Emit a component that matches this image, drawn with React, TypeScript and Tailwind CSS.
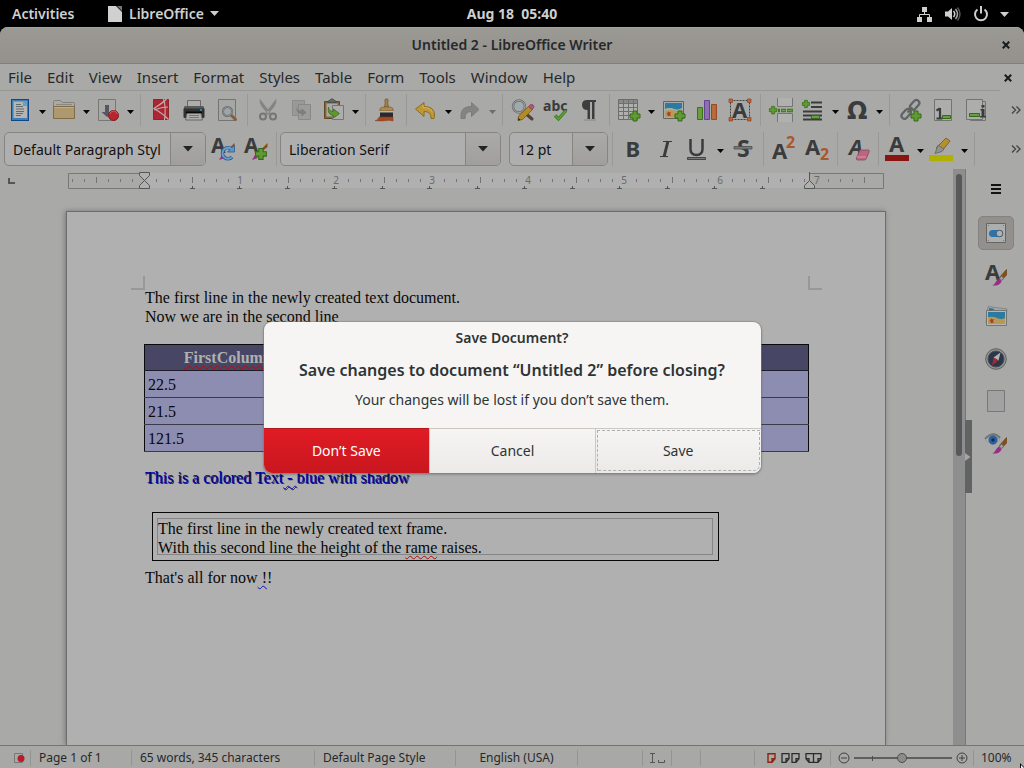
import React from "react";

type Kids = { children?: React.ReactNode };

function Ico({ children }: Kids) {
  return (
    <svg viewBox="0 0 24 24" className="h-6 w-6 shrink-0 overflow-visible" aria-hidden="true">
      {children}
    </svg>
  );
}

function Arrow({ dim }: { dim?: boolean }) {
  return (
    <svg viewBox="0 0 7 4" className="h-1 w-[7px]" aria-hidden="true">
      <path d="M0 0h7L3.500 4z" fill={dim ? "#6c6d6c" : "#050505"} />
    </svg>
  );
}

function Tool({ label, children, drop, dim }: Kids & { label: string; drop?: boolean; dim?: boolean }) {
  if (!drop) {
    return (
      <button aria-label={label} className="flex w-[33px] shrink-0 items-center justify-center">
        {children}
      </button>
    );
  }
  return (
    <div className="flex shrink-0">
      <button aria-label={label} className="flex w-8 items-center justify-center">
        {children}
      </button>
      <button aria-label={label + " options"} className="flex w-3 items-center justify-center pt-1">
        <Arrow dim={dim} />
      </button>
    </div>
  );
}

function Sep() {
  return (
    <div className="flex w-2 shrink-0 justify-center">
      <div className="my-[3px] w-px bg-[#9a9997]" />
    </div>
  );
}

const Plus = ({ x, y, s = 1 }: { x: number; y: number; s?: number }) => (
  <path
    transform={`translate(${x} ${y}) scale(${s})`}
    d="M3.500.5h4v3h3v4h-3v3h-4v-3h-3v-4h3z"
    fill="#5f9b34"
    stroke="#356b14"
  />
);

function Brush() {
  return (
    <g>
      <path d="M22.500 6.500V12l-4.500 5-2.500-2.500z" fill="#8a4d12" stroke="#5d3510" strokeWidth=".6" />
      <path d="M17.500 13l2.500 2.300-2.500 2.400-2.400-2.300z" fill="#9b9ea0" stroke="#55585a" strokeWidth=".6" />
      <path d="M15 15.500l2.600 2.400c-1 3.500-4 5-9.600 4.600 3.500-.8 4-5.600 7-7z" fill="#972f86" />
    </g>
  );
}

function Letter({
  ch,
  x,
  y,
  size,
  italic,
  fill = "#3a3b3c",
  family = "'Noto Sans', sans-serif",
}: {
  ch: string;
  x: number;
  y: number;
  size: number;
  italic?: boolean;
  fill?: string;
  family?: string;
}) {
  return (
    <text x={x} y={y} fontSize={size} fontWeight="700" fontStyle={italic ? "italic" : "normal"} fontFamily={family} fill={fill}>
      {ch}
    </text>
  );
}

function Combo({ label, value, className }: { label: string; value: string; className: string }) {
  return (
    <div className={"flex h-[34px] shrink-0 overflow-hidden rounded-[5px] border border-[#868380] bg-[#afafaf] " + className}>
      <input aria-label={label} defaultValue={value} className="w-full min-w-0 flex-1 bg-transparent pl-2 text-[14px] text-[#111] outline-none" />
      <button aria-label={label + " list"} className="flex w-[35px] shrink-0 items-center justify-center border-l border-[#868380] bg-linear-to-b from-[#aaaaa8] to-[#a19f9d]">
        <svg viewBox="0 0 10 6" className="h-[6px] w-[10px]" aria-hidden="true">
          <path d="M0 0h10L5 5.500z" fill="#202426" />
        </svg>
      </button>
    </div>
  );
}

function StandardToolbar() {
  return (
    <div className="flex h-[38px] shrink-0 overflow-hidden pl-1">
      <Tool label="New" drop>
        <Ico>
          <rect x="3.500" y="1.500" width="17" height="21" fill="#3d7fb5" stroke="#0d478a" />
          <path d="M5 3h14v17H5z" fill="#639cc5" />
          <path d="M6 4h9l4 4v12H6z" fill="#b5b6b4" />
          <path d="M15 4v4h4z" fill="#7c96a8" />
          <path d="M8 6.500h5M8 8.500h7M8 11h8M8 13.500h8M8 15.500h7M8 17.500h5" stroke="#606b72" />
        </Ico>
      </Tool>
      <Tool label="Open" drop>
        <Ico>
          <path d="M1.500 20.500v-17q0-1 1-1h6l2 2h11q1 0 1 1v15z" fill="#aaa9a5" stroke="#828079" />
          <path d="M4 6.500h16" stroke="#888" />
          <path d="M1.500 8.500h21v12h-21z" fill="#ad986f" stroke="#806b42" />
          <path d="M2.500 9.500h19" stroke="#c0ae8b" />
        </Ico>
      </Tool>
      <Tool label="Save" drop>
        <Ico>
          <path d="M2.500 1.500h17v21h-17z" fill="#a8a8a6" stroke="#777775" />
          <path d="M9 7h4v7h3.500L11 19l-5.500-5H9z" fill="#565860" />
          <circle cx="17.500" cy="17.500" r="5" fill="#b62530" stroke="#8b151d" />
          <path d="M13.500 16q1.500-3 4-3t4 3" stroke="#d0616b" fill="none" />
        </Ico>
      </Tool>
      <Sep />
      <Tool label="Export as PDF">
        <Ico>
          <path d="M4.500 1.500h15v20h-15z" fill="#ac2530" stroke="#89272c" />
          <path d="M17.500 1c-2.500 3-6.500 5.500-12.500 9.500 5 3 10 6 14.500 11M14.500 1c2 6 2 14 1 21M5 12c5-2 10-3 14-3" fill="none" stroke="#c4a8a8" strokeWidth="1.200" />
        </Ico>
      </Tool>
      <Tool label="Print">
        <Ico>
          <path d="M5.500 2.500h13v7h-13z" fill="#adadab" stroke="#696967" />
          <path d="M3 8h18l1.500 3v8q0 1-1 1h-19q-1 0-1-1v-8z" fill="#303231" />
          <path d="M3 8h18l1 2.500H2z" fill="#595b5a" />
          <path d="M4 14.500h16" stroke="#090909" strokeWidth="2" />
          <path d="M5 15.500h14l1.500 6.500h-17z" fill="#adadab" stroke="#686866" />
          <path d="M7 17.500h10M7 19.500h10" stroke="#797977" />
          <path d="M18 11h2v2h-2z" fill="#2789b1" />
        </Ico>
      </Tool>
      <Tool label="Print preview">
        <Ico>
          <path d="M3.500 1.500h17v21h-17z" fill="#a6a6a4" stroke="#747472" />
          <path d="M17 18l3.500 3.500" stroke="#805f42" strokeWidth="3" strokeLinecap="round" />
          <circle cx="12.500" cy="13.500" r="4.500" fill="#9ea4a7" stroke="#626466" strokeWidth="2" />
          <circle cx="12.500" cy="13.500" r="4.500" fill="none" stroke="#a4a6a7" strokeWidth=".7" />
        </Ico>
      </Tool>
      <Sep />
      <Tool label="Cut">
        <Ico>
          <path d="M4 1.500q-.5 4 2 7l6.500 8 1.500-2zM20 1.500q.5 4-2 7l-6.500 8-1.500-2z" fill="#858584" stroke="#787877" strokeWidth=".5" />
          <circle cx="7" cy="18.500" r="3" fill="none" stroke="#757574" strokeWidth="2" />
          <circle cx="17" cy="18.500" r="3" fill="none" stroke="#757574" strokeWidth="2" />
        </Ico>
      </Tool>
      <Tool label="Copy">
        <Ico>
          <path d="M3.500 2.500h12v15h-12z" fill="#999998" stroke="#8c8c8b" />
          <path d="M9.500 6.500h12v15h-12z" fill="#9c9c9b" stroke="#888887" />
          <path d="M7.500 8q0 4.500 5 4.500V10l5 4.500-5 4v-2.500q-6-.5-5-8z" fill="#7d7e7f" />
        </Ico>
      </Tool>
      <Tool label="Paste" drop>
        <Ico>
          <path d="M3.500 3.500h15v17h-15z" fill="#836743" stroke="#604721" />
          <path d="M5.500 5.500h11v13h-11z" fill="#a9a9a7" />
          <path d="M6.500 4.500q0-2 2.500-2 0-1.500 2-1.500t2 1.500q2.500 0 2.500 2z" fill="#676967" stroke="#4a4c4a" />
          <path d="M11.500 7.500h11v14h-11z" fill="#adadab" stroke="#757573" />
          <path d="M7.500 9q0 4.500 5 4.500V11l6 4.500-6 4.500v-2.500q-6.500-.5-5-8.500z" fill="#5e982c" stroke="#3d701c" strokeWidth=".8" />
        </Ico>
      </Tool>
      <Sep />
      <Tool label="Clone formatting">
        <Ico>
          <path d="M10.500 9l.8-4q-1-3 .2-4h2q1.200 1 .2 4l.8 4z" fill="#a7834d" stroke="#70552c" strokeWidth=".8" />
          <path d="M6 10.500q1-1.500 4-1.500h5q3 0 4 1.500V13H6z" fill="#ac8a52" stroke="#6f552f" strokeWidth=".6" />
          <path d="M6 13h13v1.500H6z" fill="#b4b6b4" />
          <path d="M6 14.500h13V19H6z" fill="#292b2a" />
          <path d="M5 19h14v4q-4-1-6-.5-3 .8-12 .2 3-.2 4-3.700z" fill="#a94922" stroke="#823b21" strokeWidth=".5" />
        </Ico>
      </Tool>
      <Sep />
      <Tool label="Undo" drop>
        <Ico>
          <path d="M10 4.500v4q10.500 0 10.500 8.500 0 2-.5 3.500h-3q.5-7-7-7v5L1.500 11z" fill="#bd9834" stroke="#8c6b1e" />
          <path d="M9 7v2.500q8 0 9.500 5" fill="none" stroke="#d1b667" />
        </Ico>
      </Tool>
      <Tool label="Redo" drop dim>
        <Ico>
          <path d="M13.500 4.500v4Q3 8.500 3 17v3.500h4q-.5-7 6.500-7v5l7.500-7z" fill="#848484" stroke="#7b7b7b" />
        </Ico>
      </Tool>
      <Sep />
      <Tool label="Find and replace">
        <Ico>
          <path d="M14 15l7 6" stroke="#554034" strokeWidth="3" strokeLinecap="round" />
          <circle cx="8" cy="8.500" r="6" fill="#a1a9ab" stroke="#656768" strokeWidth="2.400" />
          <circle cx="8" cy="8.500" r="6" fill="none" stroke="#a6a8a8" />
          <path d="M17.500 8.500l4 3-10 10-4.500 1 .5-4.500z" fill="#b58b26" stroke="#71551c" strokeWidth=".8" />
          <path d="M17.500 8.500l2-2q1-.5 2.500.5 1.500 1.300.7 2.500l-1.700 2z" fill="#b0557c" stroke="#863d59" strokeWidth=".8" />
          <path d="M7.500 20l-.5 2.500 2.500-.5z" fill="#222" />
        </Ico>
      </Tool>
      <Tool label="Spelling">
        <Ico>
          <Letter ch="abc" x={-1} y={13} size={14} />
          <path d="M11 17.500l3.500 3.500 7.500-8.500" fill="none" stroke="#397b24" strokeWidth="3.200" />
          <path d="M11 17.500l3.500 3.500 7.500-8.500" fill="none" stroke="#5d9f36" strokeWidth="1.600" />
        </Ico>
      </Tool>
      <Tool label="Formatting marks">
        <Ico>
          <path d="M10 2h9v2h-1.500v17H15V4h-2v17h-2.500v-9Q5 12 5 7t5-5z" fill="#3c3d3e" />
          <path d="M7 22h12" stroke="#888" />
        </Ico>
      </Tool>
      <Sep />
      <Tool label="Table" drop>
        <Ico>
          <path d="M1.500 1.500h19v20h-19z" fill="#afafad" stroke="#6b6d6b" />
          <path d="M2 2h18v3.500H2z" fill="#898b89" />
          <path d="M1.500 5.500h19M1.500 9.500h19M1.500 13.500h19M1.500 17.500h19M6.500 1.500v20M11.500 1.500v20M16.500 1.500v20" stroke="#6e706e" fill="none" />
          <Plus x={12.500} y={12.500} />
        </Ico>
      </Tool>
      <Tool label="Image">
        <Ico>
          <path d="M1.500 3.500h20v17h-20z" fill="#aaa" stroke="#626462" />
          <path d="M3 5h17v9H3z" fill="#297ba2" />
          <path d="M3 11q5-2 9 0t8-1v9H3z" fill="#b89a58" />
          <path d="M3 11q5-2 9 0t8-1v1.500q-4 2-8 1t-9 .5z" fill="#9ab0b4" />
          <path d="M6 13l1 1.500 2-.5-1 2 1 2-2-.5-1 1-.5-2-1.500-1h1.500z" fill="#a83c1d" />
          <Plus x={12.500} y={12.500} />
        </Ico>
      </Tool>
      <Tool label="Chart">
        <Ico>
          <path d="M2.500 9.500h5v12h-5z" fill="#679f3f" stroke="#3d7218" />
          <path d="M9.500 2.500h5v19h-5z" fill="#8c70ad" stroke="#634393" />
          <path d="M16.500 6.500h5v15h-5z" fill="#b76a3f" stroke="#964820" />
        </Ico>
      </Tool>
      <Tool label="Text box">
        <Ico>
          <path d="M2.500 2.500h19v19h-19z" fill="none" stroke="#414243" strokeDasharray="2 1" />
          <Letter ch="A" x={4} y={20} size={22} />
          <path d="M1 1h3.500v3.500H1zM19.500 1H23v3.500h-3.500zM1 19.500h3.500V23H1zM19.500 19.500H23V23h-3.500z" fill="#b3693f" stroke="#9c4720" strokeWidth=".8" />
        </Ico>
      </Tool>
      <Sep />
      <Tool label="Page break">
        <Ico>
          <path d="M8.500 0v8.500h15V0M8.500 24v-8.500h15V24" fill="#b0b0ae" stroke="#747674" />
          <Plus x={0} y={8} s={0.75} />
          <path d="M9 12.500h2M12 12.500h5M18 12.500h6" stroke="#3c731d" strokeWidth="3.500" />
          <path d="M12.500 12.500h4M18.500 12.500h5" stroke="#69a343" strokeWidth="1.500" />
        </Ico>
      </Tool>
      <Tool label="Field" drop>
        <Ico>
          <path d="M10 4.500h11M10 9h11M2 13.500h19M2 17.500h19M2 21.500h19" stroke="#3b3c3d" strokeWidth="2.200" />
          <Plus x={1} y={2} s={0.72} />
          <path d="M10.500 17.500h8v3h-8z" fill="#68a145" stroke="#346c19" />
        </Ico>
      </Tool>
      <Tool label="Symbol" drop>
        <Ico>
          <Letter ch="Ω" x={2} y={21} size={24} family="'DejaVu Sans', sans-serif" />
        </Ico>
      </Tool>
      <Sep />
      <Tool label="Hyperlink">
        <Ico>
          <g fill="none" stroke="#606264" strokeWidth="2.200">
            <rect x="0" y="-3" width="11" height="6" rx="3" transform="translate(4.500 20) rotate(-48)" />
            <rect x="0" y="-3" width="11" height="6" rx="3" transform="translate(13 11) rotate(-48)" />
            <path d="M9.500 14.500l5-5" />
          </g>
          <Plus x={12.500} y={12.500} />
        </Ico>
      </Tool>
      <Tool label="Footnote">
        <Ico>
          <path d="M3.500 1.500h17v21h-17z" fill="#adadab" stroke="#727472" />
          <path d="M9 10v11M5.500 20.500h6M9 10.500l-3.500 2" stroke="#3a3b3c" strokeWidth="2.200" fill="none" />
          <path d="M11.500 17.500h8v3h-8z" fill="#679e43" stroke="#346b18" />
        </Ico>
      </Tool>
      <Tool label="Endnote">
        <Ico>
          <path d="M6.500 3.500h15v19h-15z" fill="#a9a9a7" stroke="#727472" />
          <path d="M2.500 1.500h16v20h-16z" fill="#adadab" stroke="#727472" />
          <path d="M5.500 15.500h10v3h-10z" fill="#679e43" stroke="#346b18" />
          <path d="M17.500 7h3v2.500h-3zM16.500 11h4v7h1.500v1.500h-6V18h1.500v-5.500h-1z" fill="#3a3b3c" />
        </Ico>
      </Tool>
      <button aria-label="More standard tools" className="ml-auto flex w-[16px] items-center justify-center">
        <More />
      </button>
    </div>
  );
}

function More() {
  return (
    <svg viewBox="0 0 10 8" className="h-2 w-[10px]" aria-hidden="true">
      <path d="M1 .5L4.500 4 1 7.500M5.500.5L9 4 5.500 7.500" fill="none" stroke="#444647" strokeWidth="1.400" />
    </svg>
  );
}

function FormattingToolbar() {
  return (
    <div className="flex h-10 shrink-0 items-stretch overflow-hidden pl-1">
      <div className="flex items-center">
        <Combo label="Paragraph style" value="Default Paragraph Styl" className="w-[202px]" />
      </div>
      <div className="flex">
        <Tool label="Update style">
          <Ico>
            <Letter ch="A" x={0} y={16} size={21} />
            <path d="M8 23l3-5 3 3z" fill="#972f86" />
            <path d="M23.500 6v4l-5 4-1-2z" fill="#8a4d12" />
            <path d="M20.500 12A5.500 5.500 0 1 0 21 20" fill="none" stroke="#2c5d93" strokeWidth="3.600" />
            <path d="M23.500 8v7h-7z" fill="#5d94c7" stroke="#2c5d93" strokeWidth=".8" />
            <path d="M20.500 12A5.500 5.500 0 1 0 21 20" fill="none" stroke="#6b9fd0" strokeWidth="1.800" />
          </Ico>
        </Tool>
        <Tool label="New style">
          <Ico>
            <Letter ch="A" x={0} y={16} size={21} />
            <path d="M8 23l3-5 3 3z" fill="#972f86" />
            <path d="M23.500 6v4l-5 4-1-2z" fill="#8a4d12" />
            <Plus x={11} y={11} s={1.08} />
          </Ico>
        </Tool>
        <Sep />
      </div>
      <div className="flex items-center gap-2">
        <Combo label="Font name" value="Liberation Serif" className="w-[221px]" />
        <Combo label="Font size" value="12 pt" className="w-[99px]" />
      </div>
      <Sep />
      <Tool label="Bold">
        <Ico>
          <Letter ch="B" x={4.500} y={20} size={22} />
        </Ico>
      </Tool>
      <Tool label="Italic">
        <Ico>
          <path d="M9 4.500h9M6 19.500h8" stroke="#3a3b3c" />
          <path d="M10 20L14 4" stroke="#3a3b3c" strokeWidth="3" />
        </Ico>
      </Tool>
      <Tool label="Underline" drop>
        <Ico>
          <path d="M4.500 2v10q0 6 6 6t6-6V2" fill="none" stroke="#3a3b3c" strokeWidth="2.500" />
          <path d="M1.500 20.500h18v2h-18z" fill="#777877" stroke="#303132" strokeWidth=".8" />
        </Ico>
      </Tool>
      <Tool label="Strikethrough">
        <Ico>
          <Letter ch="S" x={6} y={20} size={23} />
          <path d="M3 9.500h18v2.500H3z" fill="#777977" stroke="#4d4f4f" strokeWidth=".8" />
        </Ico>
      </Tool>
      <Sep />
      <Tool label="Superscript">
        <Ico>
          <Letter ch="A" x={0} y={22} size={22} />
          <Letter ch="2" x={14} y={11} size={16} fill="#a9582c" />
        </Ico>
      </Tool>
      <Tool label="Subscript">
        <Ico>
          <Letter ch="A" x={0} y={18} size={22} />
          <Letter ch="2" x={15} y={23} size={16} fill="#a9582c" />
        </Ico>
      </Tool>
      <Sep />
      <Tool label="Clear formatting">
        <Ico>
          <Letter ch="A" x={3} y={18} size={22} italic />
          <path d="M14 13h8.500q1 0 .8 1.500L20.500 21q-.5 2-2 2h-7q-1.500 0-1-2z" fill="#bb6680" stroke="#8a4660" strokeWidth=".8" />
          <path d="M11 20h9" stroke="#d39aae" />
        </Ico>
      </Tool>
      <Sep />
      <Tool label="Font color" drop>
        <Ico>
          <Letter ch="A" x={3} y={15} size={22} />
          <path d="M-1 18h24v6H-1z" fill="#881511" />
        </Ico>
      </Tool>
      <Tool label="Highlighting" drop>
        <Ico>
          <path d="M16 1l4 3-8 10-6-3z" fill="#b7902e" stroke="#725819" strokeWidth=".8" />
          <path d="M8 8l6 4-2 2.500-7 2z" fill="#8f9290" stroke="#606361" strokeWidth=".8" />
          <path d="M-1 18h24v6H-1z" fill="#b1b000" />
        </Ico>
      </Tool>
      <Sep />
      <button aria-label="More formatting tools" className="ml-auto flex w-[16px] items-center justify-center">
        <More />
      </button>
    </div>
  );
}

const quarterTicks = Array.from({ length: 67 }, (_, i) => i);

function Ruler() {
  const origin = 76;
  const step = 12;
  return (
    <svg viewBox="0 0 816 20" className="mx-auto h-5 w-[816px] shrink-0" aria-hidden="true">
      <path d="M76 3h666v15H76z" fill="#b0b0b0" />
      <path d="M76 3.500H.5v15H76M741 3.500h74.500v15H741" fill="none" stroke="#777876" />
      {quarterTicks.map((i) => {
        const n = i - 6;
        const x = origin + n * step + 0.5;
        if (n === 0 || (n > 0 && n % 8 === 0)) return null;
        return <path key={i} d={n % 4 === 0 ? `M${x} 7v6` : `M${x} 9v3`} stroke="#737473" />;
      })}
      {[1, 2, 3, 4, 5, 6, 7].map((n) => (
        <text key={n} x={origin + n * 96 - (n === 7 ? 2 : 0)} y="14" fontSize="10" textAnchor={n === 7 ? "start" : "middle"} fontFamily="'Noto Sans', sans-serif" fill="#6a6b6a">
          {n}
        </text>
      ))}
      {Array.from({ length: 13 }, (_, i) => (
        <path key={i} d={`M${Math.round(origin + (i + 1) * 47.5) - 2} 18.500h5M${Math.round(origin + (i + 1) * 47.5)}.5 16v2`} stroke="#555" />
      ))}
      <path d="M71.500 2.500h10v3l-5 5 5 5v3h-10v-3l5-5-5-5z" fill="#b0b0b0" stroke="#555756" />
      <path d="M741.500 2v8.500l5 5v3h-10v-3l5-5" fill="#b0b0b0" stroke="#555756" />
    </svg>
  );
}

function Document() {
  return (
    <section className="relative mx-auto mt-[21px] flex w-[820px] flex-1 flex-col border border-b-0 border-[#6b6c6c] bg-[#b0b0b0] pt-[76px] pr-[76px] pl-[77px] font-['Liberation_Serif','Times_New_Roman',serif] text-[16px] leading-[19px] text-[#080808] shadow-[-1px_0_5px_#777]">
      <div className="absolute top-[64px] left-[64px] h-[14px] w-[14px] border-r-2 border-b-2 border-[#989898]" />
      <div className="absolute top-[64px] right-[63px] h-[14px] w-[14px] border-b-2 border-l-2 border-[#989898]" />
      <p className="pl-px">The first line in the newly created text document.</p>
      <p className="pl-px">Now we are in the second line</p>
      <table className="mt-[18px] w-full table-fixed border-collapse border border-[#0a0a0a] text-left">
        <thead>
          <tr className="h-[26px] border-b border-[#1c1c28] bg-[#474765]">
            <th className="text-center font-bold text-[#b0b0b0]">
              <span className="underline decoration-[#b00d0d] decoration-wavy decoration-1 underline-offset-2">FirstColumn</span>
            </th>
            <th />
            <th />
            <th />
          </tr>
        </thead>
        <tbody>
          {["22.5", "21.5", "121.5"].map((v) => (
            <tr key={v} className="h-[27px] border-b border-[#3a3a48] bg-[#8d8db1]">
              <td className="px-[3px] py-[3px]">{v}</td>
              <td />
              <td />
              <td />
            </tr>
          ))}
        </tbody>
      </table>
      <p className="mt-4 pl-px text-[#0000a8] [text-shadow:1px_1px_0_#222]">
        This is a colored Text
        <span className="underline decoration-[#1515b0] decoration-wavy decoration-1 underline-offset-2"> - </span>
        blue with shadow
      </p>
      <div className="mt-[25px] ml-2 w-[567px] border border-[#080808] py-[5px] pr-[5px] pl-1">
        <div className="border border-[#858585]">
          <p>The first line in the newly created text frame.</p>
          <p className="-mb-[3px]">
            With this second line the height of the{" "}
            <span className="underline decoration-[#b00d0d] decoration-wavy decoration-1 underline-offset-2">rame</span> raises.
          </p>
        </div>
      </div>
      <p className="mt-[7px] pl-px">
        That's all for now<span className="underline decoration-[#1515b0] decoration-wavy decoration-1 underline-offset-2"> !</span>!
      </p>
    </section>
  );
}

function SideButton({ label, active, children }: Kids & { label: string; active?: boolean }) {
  return (
    <button
      aria-label={label}
      className={"flex h-[34px] w-9 items-center justify-center rounded-[5px] " + (active ? "border border-[#85817e] bg-[#938f8c]" : "")}
    >
      {children}
    </button>
  );
}

function Sidebar() {
  return (
    <aside className="relative flex w-[59px] shrink-0 flex-col items-center gap-2 border-l border-[#777776] pt-[3px] pl-[2px]">
      <button aria-label="Collapse sidebar" className="absolute top-[251px] -left-px flex h-[73px] w-[7px] items-center bg-[#616362]">
        <svg viewBox="0 0 6 8" className="h-2 w-[6px]" aria-hidden="true">
          <path d="M0 0l5.500 4L0 8z" fill="#a5a5a4" />
        </svg>
      </button>
      <SideButton label="Sidebar settings">
        <svg viewBox="0 0 10 10" className="h-[10px] w-[10px]" aria-hidden="true">
          <path d="M0 1h10M0 5h10M0 9h10" stroke="#111314" strokeWidth="2" />
        </svg>
      </SideButton>
      <div className="mt-[2px] flex flex-col gap-2">
        <SideButton label="Properties" active>
          <Ico>
            <path d="M2.500 2.500h19v19h-19z" fill="#adafae" stroke="#656766" />
            <rect x="5" y="9" width="14" height="7" rx="3.500" fill="#2e72ac" />
            <circle cx="15.500" cy="12.500" r="3.300" fill="#afb2b4" stroke="#4a5d70" />
            <path d="M4 4h1v1H4zM19 4h1v1h-1zM4 19h1v1H4zM19 19h1v1h-1z" fill="#777" />
          </Ico>
        </SideButton>
        <SideButton label="Styles">
          <Ico>
            <Letter ch="A" x={1} y={17} size={22} />
            <Brush />
          </Ico>
        </SideButton>
        <SideButton label="Gallery">
          <Ico>
            <path d="M4 1.500l19 2.500-2 15-19-1z" fill="#a3a6a6" stroke="#777" strokeWidth=".7" />
            <path d="M5 3l6 1-6 3z" fill="#2b7294" />
            <path d="M2.500 5.500h20v15h-20z" fill="#b4b5b4" stroke="#666" strokeWidth=".8" />
            <path d="M4 7h17v7H4z" fill="#297ba2" />
            <path d="M4 12q5-1 9 1t8 0v6H4z" fill="#b79856" />
            <path d="M7 13l1 1.500 2-.5-1 2 1 2-2-.5-1 1-.5-2-1.500-1h1.500z" fill="#a83c1d" />
          </Ico>
        </SideButton>
        <SideButton label="Navigator">
          <Ico>
            <circle cx="12" cy="12" r="10.300" fill="#929493" stroke="#5f6261" />
            <circle cx="12" cy="12" r="8" fill="#2b3748" stroke="#494f57" />
            <path d="M16.500 5.500l-2 8-5-3z" fill="#b1b3b3" />
            <path d="M9.500 10.500l5 3-6.500 5z" fill="#a52a30" />
          </Ico>
        </SideButton>
        <SideButton label="Page">
          <Ico>
            <path d="M3.500 1.500h17v21h-17z" fill="#a1a2a1" stroke="#777877" />
          </Ico>
        </SideButton>
        <SideButton label="Style inspector">
          <Ico>
            <path d="M1 8q8-9 15-1" fill="none" stroke="#717474" strokeWidth="2" />
            <path d="M1 9q7-6 15 0-7 6-15 0z" fill="#b2b4b3" stroke="#8b8e8d" strokeWidth=".6" />
            <circle cx="9" cy="9" r="4.200" fill="#2c62a8" stroke="#244a79" strokeWidth=".6" />
            <circle cx="9" cy="9" r="1.700" fill="#102e57" />
            <Brush />
          </Ico>
        </SideButton>
      </div>
    </aside>
  );
}

function StatusBar() {
  const cell = "flex items-center border-l border-[#949493]";
  return (
    <footer className="flex h-[23px] shrink-0 border-t border-[#747473] bg-[#a8a8a6] text-[12px] text-[#26292a]">
      <div className="flex w-full pt-1 pb-[2px]">
        <div className="flex w-[30px] items-center justify-center pl-2">
          <svg viewBox="0 0 12 12" className="h-3 w-3" aria-hidden="true">
            <path d="M1.500 1.500h8v9h-8z" fill="none" stroke="#777" />
            <circle cx="8" cy="6.500" r="3.500" fill="#b51d2a" />
          </svg>
        </div>
        <div className={cell + " w-[101px] pl-2"}>Page 1 of 1</div>
        <div className={cell + " w-[183px] pl-2"}>65 words, 345 characters</div>
        <div className={cell + " w-[141px] pl-2"}>Default Page Style</div>
        <div className={cell + " w-[122px] justify-center"}>English (USA)</div>
        <div className={cell + " min-w-0 flex-1"} />
        <div className={cell + " w-[29px] justify-center"}>
          <svg viewBox="0 0 17 12" className="h-3 w-[17px]" aria-hidden="true">
            <path d="M1 1.500h5M3.500 1.500v9M1 10.500h5M9.500 8v2.500h6V8" fill="none" stroke="#555756" />
          </svg>
        </div>
        <div className={cell + " w-[29px]"} />
        <div className={cell + " w-[54px]"} />
        <div className={cell + " w-[76px] justify-center gap-[5px] pl-1"}>
          <button aria-label="Single-page view">
            <svg viewBox="0 0 9 10" className="h-[10px] w-[9px]" aria-hidden="true">
              <path d="M1 .7h7v5L5 9.300H1zM8 5.700H5v3.600" fill="none" stroke="#8c2410" strokeWidth="1.400" />
            </svg>
          </button>
          <button aria-label="Multiple-page view">
            <svg viewBox="0 0 19 10" className="h-[10px] w-[19px]" aria-hidden="true">
              <path d="M1 .7h7v5L5 9.300H1zM8 5.700H5v3.600M11 .7h7v5l-3 3.600h-4zM18 5.700h-3v3.600" fill="none" stroke="#2a2c2d" strokeWidth="1.300" />
            </svg>
          </button>
          <button aria-label="Book view">
            <svg viewBox="0 0 17 10" className="h-[10px] w-[17px]" aria-hidden="true">
              <path d="M1 .7h7.500v8.600H4L1 5.700zM1 5.700h3v3.600M8.500.7H16v5l-3 3.600H8.500zM16 5.700h-3v3.600" fill="none" stroke="#2a2c2d" strokeWidth="1.300" />
            </svg>
          </button>
        </div>
        <div className={cell + " w-[143px] justify-center pl-[2px]"}>
          <button aria-label="Zoom out">
            <svg viewBox="0 0 12 12" className="h-3 w-3" aria-hidden="true">
              <path d="M3 6h6" stroke="#3f4142" />
              <circle cx="6" cy="6" r="5" fill="none" stroke="#3f4142" />
            </svg>
          </button>
          <div className="relative mx-1 flex w-[98px] items-center">
            <div className="absolute left-[18px] h-[5px] w-px bg-[#4c4e4f]" />
            <input
              type="range"
              aria-label="Zoom"
              defaultValue={49}
              className="h-3 w-full appearance-none bg-transparent [&::-webkit-slider-runnable-track]:h-[2px] [&::-webkit-slider-runnable-track]:bg-[#5d5f60] [&::-webkit-slider-thumb]:-mt-1 [&::-webkit-slider-thumb]:h-[10px] [&::-webkit-slider-thumb]:w-[10px] [&::-webkit-slider-thumb]:appearance-none [&::-webkit-slider-thumb]:rounded-full [&::-webkit-slider-thumb]:border [&::-webkit-slider-thumb]:border-[#4b4d4e] [&::-webkit-slider-thumb]:bg-[#8b8d8c]"
            />
          </div>
          <button aria-label="Zoom in">
            <svg viewBox="0 0 12 12" className="h-3 w-3" aria-hidden="true">
              <path d="M3 6h6M6 3v6" stroke="#3f4142" />
              <circle cx="6" cy="6" r="5" fill="none" stroke="#3f4142" />
            </svg>
          </button>
        </div>
        <div className={cell + " w-[51px] pl-[7px]"}>100%</div>
      </div>
    </footer>
  );
}

function TopBar() {
  return (
    <header className="grid h-[27px] shrink-0 grid-cols-[1fr_auto_1fr] items-center bg-black px-3 text-[14px] font-semibold text-[#cfcfcf]">
      <div className="flex items-center">
        <button className="w-[64px] text-left">Activities</button>
        <button className="ml-8 flex items-center">
          <svg viewBox="0 0 14 16" className="h-4 w-[14px]" aria-hidden="true">
            <path d="M0 0h8l6 6v10H0z" fill="#d0d0d0" />
            <path d="M9 0h5v5z" fill="#777" />
          </svg>
          <span className="ml-[7px]">LibreOffice</span>
          <svg viewBox="0 0 9 5" className="ml-[6px] h-[5px] w-[9px]" aria-hidden="true">
            <path d="M0 0h9L4.500 5z" fill="#cfcfcf" />
          </svg>
        </button>
      </div>
      <button className="font-bold whitespace-pre">Aug 18  05:40</button>
      <button aria-label="System menu" className="flex items-center justify-end pr-[3px]">
        <svg viewBox="0 0 92 16" className="h-4 w-[92px]" aria-hidden="true">
          <g fill="#cfcfcf">
            <path d="M5 1h5v5H5zM0 11h5v5H0zM10 11h5v5h-5z" />
            <path d="M7.500 6v3M2.500 11.500v-3h10v3" fill="none" stroke="#cfcfcf" />
            <path d="M28 5.500h3L35 2v12l-4-3.500h-3z" />
            <path d="M36.500 5q2.500 3 0 6" fill="none" stroke="#cfcfcf" strokeWidth="1.500" />
            <path d="M38.500 3q4 5 0 10" fill="none" stroke="#aaa" strokeWidth="1.500" />
            <path d="M40.500 1.500q5 6.500 0 13" fill="none" stroke="#555" strokeWidth="1.500" />
            <path d="M60.500 3.500a6 6 0 1 0 7 0M64 0v7.500" fill="none" stroke="#cfcfcf" strokeWidth="2" />
            <path d="M83 6h9l-4.500 5z" />
          </g>
        </svg>
      </button>
    </header>
  );
}

function Close({ label }: { label: string }) {
  return (
    <button aria-label={label} className="flex h-4 w-4 items-center justify-center">
      <svg viewBox="0 0 8 8" className="h-2 w-2" aria-hidden="true">
        <path d="M.8.8l6.400 6.400M7.200.8L.8 7.200" stroke="#171b1d" strokeWidth="2" />
      </svg>
    </button>
  );
}

function SaveDialog() {
  return (
    <div className="absolute inset-0 flex items-center justify-center">
      <div role="dialog" aria-labelledby="save-title" className="w-[497px] overflow-hidden rounded-[8px] bg-[#f6f5f4] text-center text-[#2e3436] shadow-[0_0_0_1px_#88888888,0_1px_3px_#0006]">
        <h1 id="save-title" className="pt-[6px] text-[14px] leading-5 font-semibold">Save Document?</h1>
        <h2 className="mt-[10px] text-[16px] leading-6 font-semibold">Save changes to document “Untitled 2” before closing?</h2>
        <p className="mt-2 text-[14px] leading-5">Your changes will be lost if you don’t save them.</p>
        <div className="mt-[18px] grid h-[45px] grid-cols-3 text-[14px]">
          <button className="border-t border-[#b2161c] bg-linear-to-b from-[#e01b24] to-[#c9171f] pb-[2px] text-white">Don’t Save</button>
          <button className="border-t border-l border-[#cdc7c2] bg-linear-to-b from-[#f6f5f4] to-[#ebeae8] pb-[2px]">Cancel</button>
          <button className="border-t border-l border-[#cdc7c2] bg-linear-to-b from-[#f6f5f4] to-[#ebeae8] p-px pb-[2px]">
            <span className="flex h-full items-center justify-center rounded-br-[6px] border border-dashed border-[#aeb1b1]">Save</span>
          </button>
        </div>
      </div>
    </div>
  );
}

const menus = ["File", "Edit", "View", "Insert", "Format", "Styles", "Table", "Form", "Tools", "Window", "Help"];

export default function App() {
  return (
    <div className="relative flex h-screen flex-col overflow-hidden bg-black font-['Noto_Sans','Open_Sans',sans-serif]">
      <TopBar />
      <main className="relative flex min-h-0 flex-1 flex-col overflow-hidden rounded-t-[8px] bg-[#a9a9a7]">
        <div className="grid h-[37px] shrink-0 grid-cols-[1fr_auto_1fr] items-center border-t border-b border-t-[#a7a5a1] border-b-[#827f7b] bg-linear-to-b from-[#9b9994] to-[#94918d] px-[10px] pb-[2px] text-[14px] font-semibold text-[#26292a]">
          <span />
          <span>Untitled 2 - LibreOffice Writer</span>
          <span className="flex justify-end">
            <Close label="Close window" />
          </span>
        </div>
        <div className="flex h-[27px] shrink-0 items-center pr-2">
          <nav className="flex h-full flex-1 items-center gap-[15px] border-b border-[#969694] pl-2 text-[15px] text-[#26292a]">
            {menus.map((m) => (
              <button key={m}>{m}</button>
            ))}
          </nav>
          <Close label="Close document" />
        </div>
        <StandardToolbar />
        <FormattingToolbar />
        <div className="flex min-h-0 flex-1">
          <div className="relative flex min-w-0 flex-1 flex-col overflow-hidden pt-px pr-px">
            <svg viewBox="0 0 7 6" className="absolute top-[9px] left-2 h-[6px] w-[7px]" aria-hidden="true">
              <path d="M1 0v5h6" fill="none" stroke="#555" strokeWidth="2" />
            </svg>
            <Ruler />
            <Document />
          </div>
          <div className="flex w-3 shrink-0 justify-center bg-[#8d8e8d] pt-[5px]">
            <div className="h-[282px] w-[6px] rounded-full bg-[#565859]" />
          </div>
          <Sidebar />
        </div>
        <StatusBar />
        <SaveDialog />
        <svg viewBox="0 0 4 5" className="absolute right-0 bottom-0 h-[5px] w-1" aria-hidden="true">
          <path d="M0 0l4 4v1H0z" fill="#111" />
          <path d="M1 2l3 3H1z" fill="#eee" />
        </svg>
      </main>
    </div>
  );
}
